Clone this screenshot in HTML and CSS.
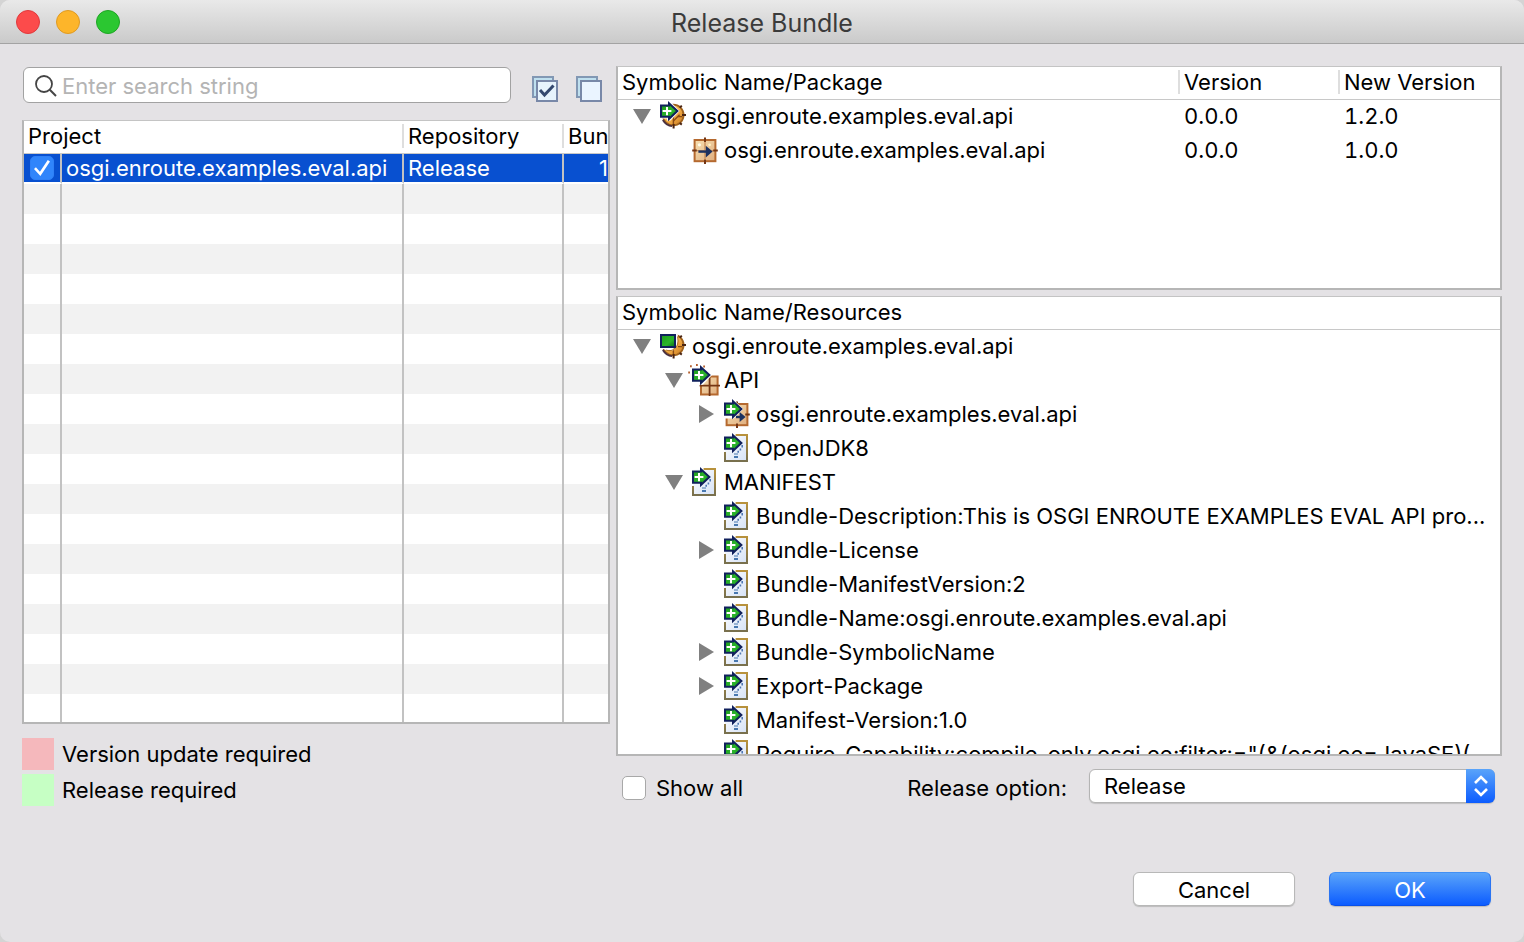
FILE: index.html
```
<!DOCTYPE html>
<html lang="en">
<head>
<meta charset="utf-8">
<title>Release Bundle</title>
<link rel="stylesheet" href="styles.css">
</head>
<body>
<svg class="defs" width="0" height="0" aria-hidden="true">
  <defs>
    <linearGradient id="green" x1="0" y1="0" x2="1" y2="1"><stop offset="0" stop-color="#1d9a1d"/><stop offset=".6" stop-color="#2bb52b"/><stop offset="1" stop-color="#0a6a14"/></linearGradient>
    <linearGradient id="orange" x1="0" y1="0" x2="1" y2="1"><stop offset="0" stop-color="#ffe08a"/><stop offset=".55" stop-color="#f3ac45"/><stop offset="1" stop-color="#c4741c"/></linearGradient>
    <linearGradient id="edge" x1="0" y1="0" x2="0" y2="1"><stop offset="0" stop-color="#b8923c"/><stop offset="1" stop-color="#78704e"/></linearGradient>
    <linearGradient id="paper" x1="0" y1="0" x2="1" y2="1"><stop offset="0" stop-color="#ffffff"/><stop offset="1" stop-color="#d6e2f6"/></linearGradient>
    <linearGradient id="tan" x1="0" y1="0" x2="1" y2="1"><stop offset="0" stop-color="#f7dfb0"/><stop offset="1" stop-color="#dfae80"/></linearGradient>
    <symbol id="plus-arrow" viewBox="0 0 16 16">
      <path d="M2.5 2.8H6.5V1.6L10.7 5.5L6.5 9.5V8.4H2.5Z" fill="url(#green)" stroke="#10205c"/>
      <path d="M3.3 5.5H7.7M5.5 3.5V7.6" stroke="#fff" fill="none"/>
    </symbol>
    <symbol id="ball" viewBox="0 0 16 16">
      <circle cx="8.6" cy="7.5" r="5.2" fill="url(#orange)" stroke="#a0621c" stroke-width=".9"/>
      <path d="M3.4 10Q5.2 12.9 8 13.1" stroke="#4a3040" stroke-width=".9" fill="none"/>
      <path d="M8.7 8V12.5M11 8.3H13" stroke="#8a4a12" stroke-width=".7" fill="none"/>
      <path d="M13 7.5H15M8.8 12V14.3M11.9 3.8L12.9 2.8M11.9 11.5L12.9 12.3" stroke="#4a2412" fill="none"/>
    </symbol>
    <symbol id="bundle-add" viewBox="0 0 16 16">
      <use href="#ball"/><path d="M2 2.3H6V1L7 .6L11.8 5.5L7.3 10.2H5.5V9.3H2Z" fill="#fff"/><use href="#plus-arrow"/>
      <path d="M8.7 10.5L11.8 7.4" stroke="#8a4a12" stroke-width=".7"/>
    </symbol>
    <symbol id="bundle" viewBox="0 0 16 16">
      <use href="#ball"/>
      <path d="M2 1.5H10.8Q12 8.4 8.5 10.3Q5.5 11 3.8 9.5H2Z" fill="#fff"/>
      <path d="M10.8 3.2Q11.9 8.4 8.3 10Q6.6 10.6 5 10" stroke="#b87828" stroke-width=".6" fill="none"/>
      <rect x="2.5" y="2.5" width="7" height="6" fill="url(#green)" stroke="#10205c"/>
    </symbol>
    <symbol id="package" viewBox="0 0 16 16">
      <rect x="3.3" y="3" width="10.4" height="10.6" fill="url(#tan)" stroke="#b5692f"/>
      <path d="M4.3 8.3H12.7M8.5 4V12.6" stroke="#c98f5c" stroke-width=".7"/>
      <path d="M2.1 8.3H4.4M12.6 8.3H14.9M8.5 1.8V4M8.5 12.7V15" stroke="#743614"/>
      <path d="M5.2 8.8H11" stroke="#1c3160" stroke-width="1.2"/><path d="M8.9 5.9L12.3 8.8L8.9 11.7Z" fill="#1c3160"/>
      <circle cx="5.7" cy="5.4" r=".8" fill="#fffce8"/><circle cx="10.8" cy="5.4" r=".7" fill="#fff0c0"/>
    </symbol>
    <symbol id="package-add" viewBox="0 0 16 16">
      <rect x="3.3" y="3" width="10.4" height="10.6" fill="url(#tan)" stroke="#b5692f"/>
      <path d="M12.6 8.3H14.9M8.5 1.8V4M8.5 12.7V15" stroke="#743614"/>
      <path d="M2 2H6.2L7 1L11.6 5.5L7 10.2H2Z" fill="#fff"/><use href="#plus-arrow"/>
      <path d="M8 9.5H11" stroke="#1c3160" stroke-width="1.2"/><path d="M9.8 7L12.8 9.5L9.8 12Z" fill="#1c3160"/>
    </symbol>
    <symbol id="api" viewBox="0 0 16 16">
      <path d="M9.5 6.3H14.8V15.2H6.5V9.5Z" fill="url(#tan)" stroke="#b5692f"/>
      <path d="M5.8 10.8H16M10.8 6.5V16" stroke="#743614" stroke-width=".9"/>
      <path d="M2 2.3H6V1L7 .6L12 5.5L7.5 10.4H5.5V9.5H2Z" fill="#fff"/><use href="#plus-arrow"/>
      <path d="M.1 4.2H1M1 1.1H1.9M4 .5H4.9M7.6 1.3H8.5" stroke="#b5602f"/>
    </symbol>
    <symbol id="doc" viewBox="0 0 16 16">
      <rect x="2.5" y="1.5" width="11" height="13" fill="url(#paper)"/>
      <path d="M7.8 1.5H13.5V14.5H2.5V10" fill="none" stroke="url(#edge)"/>
      <path d="M11.1 6.5V7.8M10.2 8.2V9.2M9.1 9.4V10.4" stroke="#4f78b4" stroke-width=".8"/>
      <path d="M7 10.7H9V11.3H7ZM7 12H9V13H7Z" fill="#4878b0"/>
      <use href="#plus-arrow"/>
    </symbol>
    <symbol id="open" viewBox="0 0 18 15"><path d="M0 0H18L9 15Z" fill="#808080"/></symbol>
    <symbol id="shut" viewBox="0 0 15 18"><path d="M0 0V18L15 9Z" fill="#808080"/></symbol>
  </defs>
</svg>
<div class="window">
  <header class="titlebar">
    <div class="lights">
      <button class="light close" aria-label="Close"></button>
      <button class="light minimize" aria-label="Minimize"></button>
      <button class="light maximize" aria-label="Zoom"></button>
    </div>
    <h1 class="title">Release Bundle</h1>
  </header>
  <main class="content">
    <section class="left">
      <div class="search-row">
        <div class="search">
          <svg class="magnifier" viewBox="0 0 22 22"><circle cx="9" cy="9" r="8" fill="none" stroke="#454545" stroke-width="1.8"/><path d="M14.8 14.8L21 21" stroke="#454545" stroke-width="2"/></svg>
          <input class="search-input" type="text" placeholder="Enter search string" aria-label="Search projects">
        </div>
        <div class="tools">
          <button class="tool" aria-label="Select all">
            <svg viewBox="0 0 26 26"><path d="M1 1H21V21H1Z" fill="#bfe0ef" stroke="#8298b4" stroke-width="2"/><path d="M5 5H25V25H5Z" fill="#e6f3fc" stroke="#7888a8" stroke-width="2"/><path d="M8 14L12.5 19L21.5 9.5" fill="none" stroke="#33486e" stroke-width="3"/></svg>
          </button>
          <button class="tool" aria-label="Deselect all">
            <svg viewBox="0 0 26 26"><path d="M1 1H21V21H1Z" fill="#bfe0ef" stroke="#8298b4" stroke-width="2"/><path d="M5 5H25V25H5Z" fill="#eaf4ff" stroke="#7888a8" stroke-width="2"/></svg>
          </button>
        </div>
      </div>
      <div class="panel projects-panel">
        <table class="projects">
          <colgroup><col class="c-check"><col class="c-project"><col class="c-repo"><col class="c-bundles"></colgroup>
          <thead><tr><th colspan="2"><span>Project</span></th><th><span>Repository</span></th><th><span>Bun</span></th></tr></thead>
          <tbody>
            <tr class="selected"><td class="check-cell"><input class="check" type="checkbox" checked aria-label="osgi.enroute.examples.eval.api"></td><td>osgi.enroute.examples.eval.api</td><td>Release</td><td class="count">1</td></tr>
            <tr><td></td><td></td><td></td><td></td></tr>
            <tr><td></td><td></td><td></td><td></td></tr>
            <tr><td></td><td></td><td></td><td></td></tr>
            <tr><td></td><td></td><td></td><td></td></tr>
            <tr><td></td><td></td><td></td><td></td></tr>
            <tr><td></td><td></td><td></td><td></td></tr>
            <tr><td></td><td></td><td></td><td></td></tr>
            <tr><td></td><td></td><td></td><td></td></tr>
            <tr><td></td><td></td><td></td><td></td></tr>
            <tr><td></td><td></td><td></td><td></td></tr>
            <tr><td></td><td></td><td></td><td></td></tr>
            <tr><td></td><td></td><td></td><td></td></tr>
            <tr><td></td><td></td><td></td><td></td></tr>
            <tr><td></td><td></td><td></td><td></td></tr>
            <tr><td></td><td></td><td></td><td></td></tr>
            <tr><td></td><td></td><td></td><td></td></tr>
            <tr><td></td><td></td><td></td><td></td></tr>
            <tr><td></td><td></td><td></td><td></td></tr>
          </tbody>
        </table>
      </div>
      <ul class="legend">
        <li><span class="swatch update"></span>Version update required</li>
        <li><span class="swatch release"></span>Release required</li>
      </ul>
    </section>
    <section class="right">
      <div class="panel packages-panel">
        <table class="tree">
          <colgroup><col><col class="c-version"><col class="c-new"></colgroup>
          <thead><tr><th><span>Symbolic Name/Package</span></th><th><span>Version</span></th><th><span>New Version</span></th></tr></thead>
          <tbody>
            <tr><td><div class="node"><button class="twisty" aria-label="Collapse"><svg class="open"><use href="#open"/></svg></button><svg class="icon"><use href="#bundle-add"/></svg><span class="label">osgi.enroute.examples.eval.api</span></div></td><td>0.0.0</td><td>1.2.0</td></tr>
            <tr><td><div class="node level-1"><span class="twisty"></span><svg class="icon"><use href="#package"/></svg><span class="label">osgi.enroute.examples.eval.api</span></div></td><td>0.0.0</td><td>1.0.0</td></tr>
          </tbody>
        </table>
      </div>
      <div class="panel resources-panel">
        <table class="tree">
          <thead><tr><th><span>Symbolic Name/Resources</span></th></tr></thead>
          <tbody>
            <tr><td><div class="node"><button class="twisty" aria-label="Collapse"><svg class="open"><use href="#open"/></svg></button><svg class="icon"><use href="#bundle"/></svg><span class="label">osgi.enroute.examples.eval.api</span></div></td></tr>
            <tr><td><div class="node level-1"><button class="twisty" aria-label="Collapse"><svg class="open"><use href="#open"/></svg></button><svg class="icon"><use href="#api"/></svg><span class="label">API</span></div></td></tr>
            <tr><td><div class="node level-2"><button class="twisty" aria-label="Expand"><svg class="shut"><use href="#shut"/></svg></button><svg class="icon"><use href="#package-add"/></svg><span class="label">osgi.enroute.examples.eval.api</span></div></td></tr>
            <tr><td><div class="node level-2"><span class="twisty"></span><svg class="icon"><use href="#doc"/></svg><span class="label">OpenJDK8</span></div></td></tr>
            <tr><td><div class="node level-1"><button class="twisty" aria-label="Collapse"><svg class="open"><use href="#open"/></svg></button><svg class="icon"><use href="#doc"/></svg><span class="label">MANIFEST</span></div></td></tr>
            <tr><td><div class="node level-2"><span class="twisty"></span><svg class="icon"><use href="#doc"/></svg><span class="label">Bundle-Description:This is OSGI ENROUTE EXAMPLES EVAL API pro...</span></div></td></tr>
            <tr><td><div class="node level-2"><button class="twisty" aria-label="Expand"><svg class="shut"><use href="#shut"/></svg></button><svg class="icon"><use href="#doc"/></svg><span class="label">Bundle-License</span></div></td></tr>
            <tr><td><div class="node level-2"><span class="twisty"></span><svg class="icon"><use href="#doc"/></svg><span class="label">Bundle-ManifestVersion:2</span></div></td></tr>
            <tr><td><div class="node level-2"><span class="twisty"></span><svg class="icon"><use href="#doc"/></svg><span class="label">Bundle-Name:osgi.enroute.examples.eval.api</span></div></td></tr>
            <tr><td><div class="node level-2"><button class="twisty" aria-label="Expand"><svg class="shut"><use href="#shut"/></svg></button><svg class="icon"><use href="#doc"/></svg><span class="label">Bundle-SymbolicName</span></div></td></tr>
            <tr><td><div class="node level-2"><button class="twisty" aria-label="Expand"><svg class="shut"><use href="#shut"/></svg></button><svg class="icon"><use href="#doc"/></svg><span class="label">Export-Package</span></div></td></tr>
            <tr><td><div class="node level-2"><span class="twisty"></span><svg class="icon"><use href="#doc"/></svg><span class="label">Manifest-Version:1.0</span></div></td></tr>
            <tr><td><div class="node level-2"><span class="twisty"></span><svg class="icon"><use href="#doc"/></svg><span class="label">Require-Capability:compile-only,osgi.ee;filter:="(&amp;(osgi.ee=JavaSE)(</span></div></td></tr>
          </tbody>
        </table>
      </div>
      <div class="options">
        <label class="show-all"><input class="check" type="checkbox">Show all</label>
        <label class="option-label" for="release-option">Release option:</label>
        <div class="select-box">
          <select class="select" id="release-option"><option>Release</option></select>
          <span class="stepper"><svg viewBox="0 0 16 22"><path d="M2 8L8 2L14 8M2 14L8 20L14 14" fill="none" stroke="#fff" stroke-width="2.6"/></svg></span>
        </div>
      </div>
    </section>
  </main>
  <footer class="actions">
    <button class="button">Cancel</button>
    <button class="button primary">OK</button>
  </footer>
</div>
</body>
</html>
```
FILE: styles.css
```
* { box-sizing: border-box; }

body {
  margin: 0;
  background: #d4d4d4;
  color: #000;
  font-family: Inter, "Noto Sans", sans-serif;
  font-size: 22px;
  line-height: 28px;
}

button, input, select { margin: 0; font: inherit; color: inherit; }
button { padding: 0; border: 0; background: none; }
svg { display: block; }
.defs { position: absolute; }

.window {
  display: flex;
  flex-direction: column;
  height: 100vh;
  min-height: 600px;
  overflow: hidden;
  border-radius: 10px;
  background: #e4e2e5;
}

/* Title bar */
.titlebar {
  display: grid;
  grid-template-columns: 1fr auto 1fr;
  align-items: center;
  height: 44px;
  padding: 0 16px;
  border-bottom: 1px solid #a3a3a3;
  background: linear-gradient(#e9e9e9, #cacaca);
}
.lights { display: flex; gap: 16px; }
.light { width: 24px; height: 24px; border: 1px solid; border-radius: 50%; }
.close { background: #fc4b4b; border-color: #e0393c; }
.minimize { background: #fdb52a; border-color: #df9a22; }
.maximize { background: #2bc731; border-color: #1ea524; }
.title { margin: 0; padding-top: 2px; font-size: 25px; font-weight: 400; line-height: 32px; color: #3b3b3b; }

/* Two-column body */
.content {
  flex: 1;
  display: grid;
  grid-template-columns: 588fr 886fr;
  gap: 6px;
  min-height: 0;
  padding: 22px 22px 0;
}
.left, .right { display: flex; flex-direction: column; min-width: 0; min-height: 0; }

.search-row { display: flex; align-items: flex-end; gap: 21px; padding: 1px 8px 17px 1px; }
.search {
  flex: 1;
  display: flex;
  align-items: center;
  gap: 5px;
  height: 36px;
  padding: 1px 11px 0;
  border: 1px solid #a2a2a2;
  border-radius: 6px;
  background: #fff;
}
.magnifier { flex: none; width: 22px; height: 22px; }
.search-input { flex: 1; min-width: 0; padding: 0; border: 0; outline: 0; background: none; }
.search-input::placeholder { color: #b4b4b4; opacity: 1; }
.tools { display: flex; gap: 18px; padding-bottom: 1px; }
.tool { width: 26px; height: 26px; }
.tool svg { width: 26px; height: 26px; }

.panel {
  overflow: hidden;
  min-height: 0;
  border: 2px solid #b6b6b6;
  border-top: 1px solid #c4c4c4;
  background: #fff;
}
.projects-panel { flex: 1; }
.packages-panel { flex: 221 1 0; margin-bottom: 6px; }
.resources-panel { flex: 457 1 0; }

table { width: 100%; border-spacing: 0; table-layout: fixed; }
th { height: 33px; padding: 0 0 2px; border-bottom: 1px solid #c8c8c8; font-weight: 400; text-align: left; white-space: nowrap; }
th span { display: block; height: 24px; padding-left: 4px; line-height: 24px; }
th + th span { margin-left: -2px; border-left: 2px solid #dedede; }
td { padding: 0; white-space: nowrap; }

.c-check { width: 38px; }
.c-project { width: 342px; }
.c-repo { width: 160px; }
.projects td { height: 30px; padding-left: 4px; border-right: 2px solid #c2c2c2; }
.projects td:last-child { border-right: 0; }
.projects tbody tr:nth-child(even) { background: #f2f2f2; }
.projects .selected td { background: #0850d0; border-bottom: 2px solid #fff; background-clip: padding-box; color: #fff; }
.projects .check-cell { padding-left: 6px; }
.projects .count { text-align: right; }

.check {
  appearance: none;
  display: block;
  flex: none;
  width: 24px;
  height: 24px;
  border: 1px solid #a8a8a8;
  border-radius: 5px;
  background: #fff;
}
.check:checked { display: grid; place-items: center; border-color: #2f80f6; background: #3085fb; }
.check:checked::before {
  content: "";
  width: 16px;
  height: 16px;
  background: #fff;
  clip-path: polygon(0 57%, 12% 45%, 37% 73%, 86% 0, 100% 9%, 40% 100%);
}

.legend { display: flex; flex-direction: column; gap: 4px; margin: 14px 0 0; padding: 0; list-style: none; }
.legend li { display: flex; align-items: center; gap: 8px; line-height: 32px; }
.swatch { width: 32px; height: 32px; }
.update { background: #f5b8bc; }
.release { background: #c6ffc4; }

/* Trees */
.c-version, .c-new { width: 160px; }
.tree td { height: 34px; padding-bottom: 2px; }
.tree td + td { padding-left: 4px; font-variant-numeric: tabular-nums; }
.node { display: flex; align-items: center; padding-left: 14px; }
.level-1 { padding-left: 46px; }
.level-2 { padding-left: 78px; }
.twisty { flex: none; display: grid; place-items: center; width: 20px; height: 32px; }
.open { width: 18px; height: 15px; }
.shut { width: 15px; height: 18px; }
.icon { flex: none; width: 32px; height: 32px; margin: 0 4px; }

.options { display: flex; align-items: flex-start; height: 50px; padding: 13px 7px 0 6px; line-height: 38px; }
.show-all { display: flex; align-items: center; gap: 10px; margin-right: auto; }
.select-box { position: relative; flex: 0 0 406px; margin-left: 22px; }
.select {
  appearance: none;
  display: block;
  width: 100%;
  height: 34px;
  padding: 0 44px 0 14px;
  border: 1px solid #b4b4b4;
  border-radius: 6px;
  background: #fff;
  box-shadow: 0 1px 1px #c0c0c0;
  line-height: 32px;
}
.stepper {
  position: absolute;
  top: 0;
  right: 0;
  display: grid;
  place-items: center;
  width: 29px;
  height: 34px;
  border-radius: 0 6px 6px 0;
  background: linear-gradient(#5aa4fa, #0c5cff);
  pointer-events: none;
}
.stepper svg { width: 16px; height: 22px; }

.actions { display: flex; justify-content: flex-end; gap: 34px; padding: 66px 33px 36px; }
.button { width: 162px; height: 34px; padding-top: 2px; border: 1px solid #b8b8b8; border-radius: 6px; background: #fff; box-shadow: 0 1px 1px #bcbcbc; }
.primary { border-color: #4290f4 #2a74f2 #0a50e8; background: linear-gradient(#5aa4fa, #0c5cff); color: #fff; }
```
